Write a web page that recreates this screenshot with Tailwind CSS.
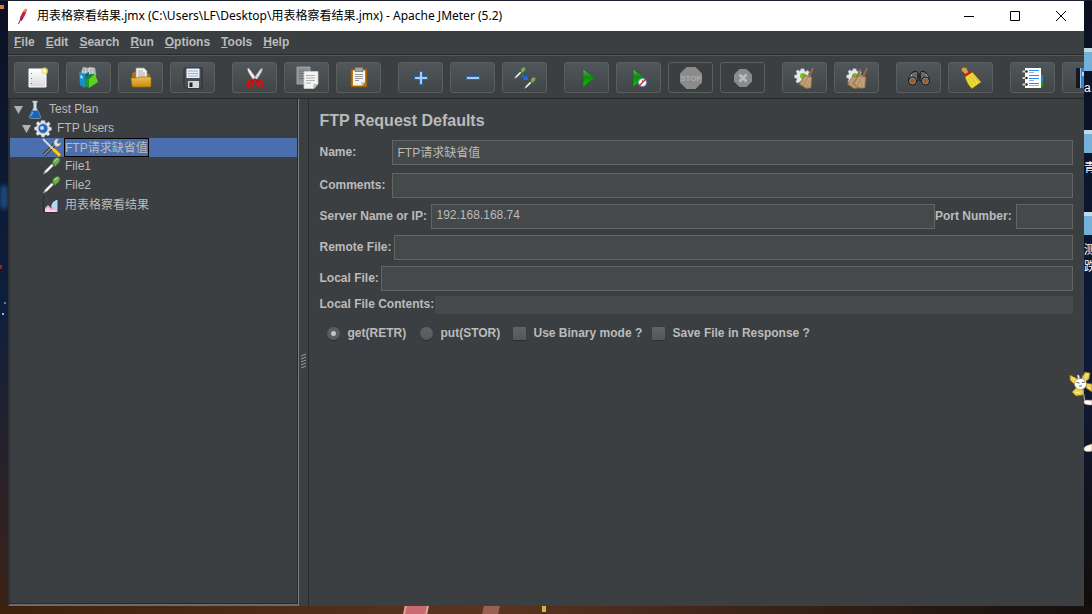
<!doctype html>
<html lang="en">
<head>
    <meta charset="UTF-8">
    <meta name="viewport" content="width=device-width, initial-scale=1.0">
    <script src="https://cdn.jsdelivr.net/npm/@tailwindcss/browser@4"></script>
    <title>用表格察看结果.jmx - Apache JMeter (5.2)</title>
</head>
<body class="h-screen overflow-hidden bg-[#0b1226] font-['Liberation_Sans','Noto_Sans_CJK_SC',sans-serif] text-xs text-[#bbbbbb]">

<!-- shared icon parts -->
<svg class="absolute size-0">
    <defs>
        <linearGradient id="play" x1="0" y1="0" x2="0" y2="1">
            <stop offset="0" stop-color="#5fb45f"/><stop offset=".45" stop-color="#118a11"/><stop offset="1" stop-color="#0cc40c"/>
        </linearGradient>
        <linearGradient id="folder" x1="0" y1="0" x2="0" y2="1">
            <stop offset="0" stop-color="#f0c04e"/><stop offset="1" stop-color="#c98711"/>
        </linearGradient>
        <linearGradient id="page" x1="0" y1="0" x2="0" y2="1">
            <stop offset="0" stop-color="#ffffff"/><stop offset="1" stop-color="#d9d9d9"/>
        </linearGradient>
        <symbol id="pipette" viewBox="0 0 20 20">
            <path d="M1 19 3 15 11 7l2 2-8 8z" fill="#dfe5df" stroke="#8f978f" stroke-width=".7"/>
            <path d="M4 16 11 9" stroke="#ffffff" stroke-width="1.6"/>
            <path d="m9.500 5.500 5 5" stroke="#35502f" stroke-width="2"/>
            <path d="M11 7c0-4 3-7 7-6.500 2.500 1 1.500 5.500-1 7l-3 3z" fill="#6da84f" stroke="#3c6b2b" stroke-width=".7"/>
            <path d="M13.500 5c1-2 2-2 3.500-3" stroke="#b5dba0" stroke-width="1.300"/>
        </symbol>
        <symbol id="gear" viewBox="0 0 20 20">
            <path d="M8 1h4l.5 2.500 1.500.600L16.200 2.600l2 2.300-1.500 2 .5 1.300L19.500 9v3l-2.500.600-.600 1.500 1.300 2.200-2.200 2-2-1.300-1.500.600L11.500 19.500h-3L7.800 17.200l-1.500-.600-2.200 1.300-2-2.200 1.300-2L2.800 12.200.5 11.500v-3l2.500-.600.600-1.500L2.300 4.200l2.200-2 2 1.300L7.500 3z" fill="#e6e8ea" stroke="#9aa0a5" stroke-width=".6"/>
        </symbol>
        <symbol id="brush" viewBox="0 0 16 22">
            <path d="m14 1-4 9" stroke="#8d6b48" stroke-width="2.200"/>
            <path d="M6 8l7 2-1 11-5 .5L0 17z" fill="#b5946d" stroke="#80603f" stroke-width=".7"/>
            <path d="M7 10 3 17M10 11l-4 9M11 12l-1 8" stroke="#d8bb92" stroke-width=".6"/>
        </symbol>
    </defs>
</svg>

<div class="grid h-screen grid-cols-[8px_minmax(0,1fr)_8px] grid-rows-[1px_minmax(0,1fr)_8px]">
    <div class="col-span-3 bg-[#1b2030]"></div>

    <!-- desktop, left of the window -->
    <div class="relative overflow-hidden bg-linear-to-b from-[#0b1123] via-[#0d1f3d] to-[#3a2014]">
        <i class="absolute left-0 top-1 h-1 w-1 bg-[#d87a3a]"></i>
        <i class="absolute left-0 top-[184px] h-6 w-2 rounded-full bg-[#1d4a80] blur-[2px]"></i>
        <i class="absolute left-0 top-[264px] h-1 w-0.5 bg-[#b01818]"></i>
        <i class="absolute left-1 top-[301px] size-0.5 bg-[#3a8f7a]"></i>
        <i class="absolute left-0.5 top-[312px] size-0.5 bg-[#9fb8e0]"></i>
    </div>

    <div class="flex min-w-0 flex-col overflow-hidden bg-[#3c3f41]">
        <header class="flex h-[30px] shrink-0 items-center bg-white text-black">
            <svg class="ml-1.5 size-5" viewBox="0 0 20 20">
                <path d="M4.500 18 7 12" stroke="#6b2a6b" stroke-width="1"/>
                <path d="M6 14c0-4 3-9 5.500-11 1-.500 1.500.500 1 2-1 4-3 7-5.500 10z" fill="#cc2037"/>
                <path d="M9 6c1-2 2-3 2.800-3.200.800.200.700 1.500.200 3.200z" fill="#f08a24"/>
                <path d="M6 14c0-1.500.500-3 1-4l2.500 2-2 3z" fill="#8a2a72"/>
            </svg>
            <h1 class="ml-[3px] flex-1 truncate font-['Noto_Sans','Noto_Sans_CJK_SC',sans-serif] text-xs">用表格察看结果.jmx (C:\Users\LF\Desktop\用表格察看结果.jmx) - Apache JMeter (5.2)</h1>
            <button class="grid h-full w-[46px] place-items-center" aria-label="Minimize"><svg class="size-3" viewBox="0 0 12 12"><path d="M1 6.500h10" stroke="#000"/></svg></button>
            <button class="grid h-full w-[46px] place-items-center" aria-label="Maximize"><svg class="size-3" viewBox="0 0 12 12"><path d="M1.500 1.500h9v9h-9z" fill="none" stroke="#000"/></svg></button>
            <button class="grid h-full w-[46px] place-items-center" aria-label="Close"><svg class="size-3" viewBox="0 0 12 12"><path d="m1 1 10 10M11 1 1 11" stroke="#000"/></svg></button>
        </header>

        <nav class="flex h-[23px] shrink-0 items-center gap-[11px] pb-0.5 pl-1.5 font-bold">
            <button><u>F</u>ile</button>
            <button><u>E</u>dit</button>
            <button><u>S</u>earch</button>
            <button><u>R</u>un</button>
            <button><u>O</u>ptions</button>
            <button><u>T</u>ools</button>
            <button><u>H</u>elp</button>
        </nav>

        <!-- toolbar -->
        <div class="flex h-11 shrink-0 items-center gap-[17px] overflow-hidden border-t border-[#282828] pl-1.5 pt-0.5 shadow-[inset_0_1px_#555758] [&_button]:grid [&_button]:h-[31px] [&_button]:w-[45px] [&_button]:shrink-0 [&_button]:place-items-center [&_button]:rounded-[3px] [&_button]:border [&_button]:border-[#5b5e5f] [&_button:enabled]:bg-linear-to-b [&_button:enabled]:from-[#50565a] [&_button:enabled]:to-[#414648] [&_svg]:size-6">
            <div class="flex gap-[7px]">
                <button aria-label="New">
                    <svg viewBox="0 0 24 24">
                        <path d="M4 3h17v18H4z" fill="url(#page)" stroke="#fff"/>
                        <path d="M6.500 7v1M6.500 12v1M6.500 17v1" stroke="#777"/>
                        <circle cx="19.500" cy="5" r="3.500" fill="#f3e35c" opacity=".75"/><circle cx="19.500" cy="5" r="1.500" fill="#fffbd0"/>
                    </svg>
                </button>
                <button aria-label="Templates">
                    <svg viewBox="0 0 24 24">
                        <path d="M4 7 6 1l5 1 2-1 5 1 1 7-8 4z" fill="#c9ced0" stroke="#84898b" stroke-width=".6"/>
                        <path d="M7 2v6M10 2v6M14 3v5M17 3v5" stroke="#8f9698" stroke-width=".8"/>
                        <path d="m2 6 6 2v14l-5-3z" fill="#168ec7"/><path d="m8 8 4-2v12l-4 4z" fill="#0b6796"/>
                        <path d="M3.500 9v3l2 1v-3z" fill="#bfe7fa"/>
                        <path d="m8 12 4 1v9l-4-2z" fill="#249a1d"/><path d="m12 13 6-5 3 8-9 6z" fill="#55d522"/>
                        <path d="m8 12 5-4h5l-6 5z" fill="#2f7c28"/>
                    </svg>
                </button>
                <button aria-label="Open">
                    <svg viewBox="0 0 24 24">
                        <path d="M3 21V7l2-1h4l2 2h10v13z" fill="#a96f10"/>
                        <path d="M7 14V2h8l3 3v9z" fill="#f2f2f2" stroke="#999" stroke-width=".7"/>
                        <path d="M9 5h5M9 7h7M9 9h7M9 11h7" stroke="#999" stroke-width=".8"/>
                        <path d="M2 12h6l2-1h12v9l-1 1H4l-1-1z" fill="url(#folder)" stroke="#9e6a0b" stroke-width=".7"/>
                    </svg>
                </button>
                <button aria-label="Save">
                    <svg viewBox="0 0 24 24">
                        <path d="M3 2h18v20H5l-2-2z" fill="#4b4e51" stroke="#2c2e30"/>
                        <path d="M5.500 2.500h13V12h-13z" fill="#e9f1fa"/>
                        <path d="M7 5h10M7 7.500h10M7 10h10" stroke="#8fb0da"/>
                        <path d="M7 15h11v7H7z" fill="#d4d6d8"/><path d="M8.500 16.500h3V21h-3z" fill="#222"/>
                    </svg>
                </button>
            </div>
            <div class="flex gap-[7px]">
                <button aria-label="Cut">
                    <svg viewBox="0 0 24 24">
                        <path d="M5 2c-1.500 2 2 7 6.500 13l2-2C10 8 7 3 5 2z" fill="#f4f4f4" stroke="#9b9b9b" stroke-width=".6"/>
                        <path d="M19 2c1.500 2-2 7-6.500 13l-2-2C14 8 17 3 19 2z" fill="#dcdcdc" stroke="#8b8b8b" stroke-width=".6"/>
                        <ellipse cx="7" cy="18" rx="2.400" ry="2.600" fill="none" stroke="#d60f0f" stroke-width="2.400"/>
                        <ellipse cx="17" cy="18" rx="2.400" ry="2.600" fill="none" stroke="#d60f0f" stroke-width="2.400"/>
                        <path d="m8.500 15.500 3.500-2 3.500 2" fill="none" stroke="#c80c0c" stroke-width="2"/>
                    </svg>
                </button>
                <button aria-label="Copy">
                    <svg viewBox="0 0 24 24">
                        <path d="M2 1h13v17H2z" fill="#8f9191" stroke="#b1b3b3" stroke-width=".8"/>
                        <path d="M4 5h9M4 7.500h9M4 10h5M4 12.500h5" stroke="#6e7070"/>
                        <path d="M9 5.500h14V18l-4 4.500H9z" fill="#f4f4f4" stroke="#ccc" stroke-width=".8"/>
                        <path d="M11 9.500h9M11 12h9M11 14.500h9M11 17h5" stroke="#b0b0b0"/>
                        <path d="M18.500 22.500V18H23z" fill="#bcbcbc"/>
                    </svg>
                </button>
                <button aria-label="Paste">
                    <svg viewBox="0 0 24 24">
                        <path d="M4 3h16v18H4z" fill="#b87813" stroke="#80510a"/>
                        <path d="M6 4.500h12V16l-3 3.500H6z" fill="#f5f5f5"/>
                        <path d="M8 1.500h8v4H8z" fill="#a3a59f" stroke="#6d6f69" stroke-width=".7"/>
                        <path d="M8 8.500h8M8 10.500h8M8 12.500h8M8 14.500h4" stroke="#999"/>
                        <path d="M14 20v-4h4z" fill="#c8c8c8"/>
                    </svg>
                </button>
            </div>
            <div class="flex gap-[7px]">
                <button aria-label="Expand All"><svg viewBox="0 0 24 24"><path d="M10.500 5.500h3v5h5v3h-5v5h-3v-5h-5v-3h5z" fill="#a9cbee" stroke="#2a66b0"/></svg></button>
                <button aria-label="Collapse All"><svg viewBox="0 0 24 24"><path d="M5.500 10.500h13v3h-13z" fill="#a9cbee" stroke="#2a66b0"/></svg></button>
                <button aria-label="Toggle">
                    <svg viewBox="0 0 24 24">
                        <use href="#pipette" x="1" y="1" width="12" height="12"/>
                        <use href="#pipette" x="11" y="11" width="12" height="12"/>
                        <path d="m9 9 4 4" stroke="#1f6fe0" stroke-width="1.800"/><path d="M15 14h-5l4-5z" fill="#1f6fe0"/>
                    </svg>
                </button>
            </div>
            <div class="flex gap-[7px]">
                <button aria-label="Start"><svg viewBox="0 0 24 24"><path d="m8 3 12 9-12 9z" fill="url(#play)" stroke="#0b6b0b" stroke-width=".6"/></svg></button>
                <button aria-label="Start no pauses">
                    <svg viewBox="0 0 24 24">
                        <path d="m6 3 12 9-12 9z" fill="url(#play)" stroke="#0b6b0b" stroke-width=".6"/>
                        <circle cx="15.500" cy="16.500" r="4" fill="#fff" stroke="#5a93d6"/>
                        <path d="M15.500 14v3" stroke="#888"/><path d="m11.500 20.500 8-8" stroke="#e02020" stroke-width="1.300"/>
                    </svg>
                </button>
                <button disabled aria-label="Stop">
                    <svg viewBox="0 0 24 24">
                        <path d="M7.500 1h9L23 7.500v9L16.500 23h-9L1 16.500v-9z" fill="#8b8b8b"/>
                        <text x="12" y="15" text-anchor="middle" font-size="8" font-weight="700" fill="#adadad">STOP</text>
                    </svg>
                </button>
                <button disabled aria-label="Shutdown">
                    <svg viewBox="0 0 24 24">
                        <path d="M8.500 3h7L21 8.500v7L15.500 21h-7L3 15.500v-7z" fill="#8b8b8b"/>
                        <path d="m8.500 8.500 7 7M15.500 8.500l-7 7" stroke="#bababa" stroke-width="2.800"/>
                    </svg>
                </button>
            </div>
            <div class="flex gap-[7px]">
                <button aria-label="Clear">
                    <svg viewBox="0 0 24 24">
                        <use href="#gear" x="1" y="2" width="17" height="17"/><circle cx="10" cy="10" r="3" fill="#7cbf1c"/>
                        <use href="#brush" x="6" y="1" width="16" height="22"/>
                    </svg>
                </button>
                <button aria-label="Clear All">
                    <svg viewBox="0 0 24 24">
                        <use href="#gear" x="1" y="2" width="17" height="17"/><circle cx="10" cy="10" r="3" fill="#7cbf1c"/>
                        <use href="#brush" x="2" y="2" width="16" height="21"/><use href="#brush" x="8" y="1" width="16" height="22"/>
                    </svg>
                </button>
            </div>
            <div class="flex gap-[7px]">
                <button aria-label="Search">
                    <svg viewBox="0 0 24 24">
                        <path d="M5 6.500 9 5l2 2v8H1.500v-2zM19 6.500 15 5l-2 2v8h9.500v-2z" fill="#686868" stroke="#171717"/>
                        <path d="M10 8h4v5h-4z" fill="#2b2b2b"/><path d="m5 8-2 4M19 8l2 4" stroke="#b5b5b5"/>
                        <circle cx="5.500" cy="15" r="4" fill="#878787" stroke="#171717"/><circle cx="5.500" cy="15" r="2.400" fill="#9b5a2a"/>
                        <circle cx="18.500" cy="15" r="4" fill="#878787" stroke="#171717"/><circle cx="18.500" cy="15" r="2.400" fill="#9b5a2a"/>
                    </svg>
                </button>
                <button aria-label="Reset Search">
                    <svg viewBox="0 0 24 24">
                        <path d="M3 2c2-1.500 5-.500 5 1l2 4-3 2-3-3C2.500 5.500 2 3.500 3 2z" fill="#d9a04a" stroke="#865311" stroke-width=".6"/>
                        <path d="m6 10 7-4 9 10-9 6.500C10 20 7 15 6 10z" fill="#f0dc3c" stroke="#a98a12" stroke-width=".7"/>
                        <path d="m9 12 5 8M11 10l6 8M13 9l7 7" stroke="#c9ab1c" stroke-width=".7"/>
                        <path d="m5.500 10 7-4.500" stroke="#cf1d1d" stroke-width="2.500"/>
                    </svg>
                </button>
            </div>
            <div class="flex gap-[7px]">
                <button aria-label="Function Helper">
                    <svg viewBox="0 0 24 24">
                        <path d="M18 9h4v6h-4z" fill="#1784e6"/><path d="M18 15h4v6h-4z" fill="#18a018"/>
                        <path d="M4 2h16v20H4z" fill="#fff"/>
                        <path d="M8 4.500h10M8 9.500h10M8 12.500h10M8 17.500h10" stroke="#2f8bec"/><path d="M8 6.500h5M8 14.500h5M8 19.500h10" stroke="#7cb5f0"/>
                        <path d="M1.500 5.500h4M1.500 12h4M1.500 18.500h4" stroke="#d5d5d5" stroke-width="2"/>
                        <circle cx="5.500" cy="5.500" r="1.200" fill="#222"/><circle cx="5.500" cy="12" r="1.200" fill="#222"/><circle cx="5.500" cy="18.500" r="1.200" fill="#222"/>
                    </svg>
                </button>
                <button aria-label="Help">
                    <svg viewBox="0 0 24 24">
                        <path d="M3 2h18v20H3z" fill="#3e7fd4"/><path d="M3 2h4v20H3z" fill="#15181c"/><path d="M7.500 2v20" stroke="#9ec2ee"/><path d="M9 6h3v4H9z" fill="#b5d5f7"/>
                    </svg>
                </button>
            </div>
        </div>

        <main class="flex min-h-0 flex-1 border-t border-[#27292a]">
            <!-- test plan tree -->
            <ul class="w-[27%] shrink-0 border-b-2 border-l-2 border-r border-b-[#696c6e] border-l-[#2d3032] border-r-[#7b7e80] pt-px shadow-[inset_-1px_-1px_#27292a] [&>li]:flex [&>li]:h-[19px] [&>li]:items-center [&_svg]:shrink-0">
                <li class="pl-1">
                    <svg class="size-2.5" viewBox="0 0 10 10"><path d="M0 1h9L4.500 9z" fill="#b0b0b0"/></svg>
                    <svg class="mx-px h-[19px] w-5" viewBox="0 0 20 19">
                        <path d="M7.500 1h5v1l-1 1v5l4.500 9-1 1.500H5L4 17l4.500-9V3l-1-1z" fill="#cfdbe4" stroke="#8a98a3" stroke-width=".5"/>
                        <path d="m7.500 10.500h5l3.300 6.500-1 1.200H5.200L4.200 17z" fill="#1a65b8"/><path d="m8 12-2 4" stroke="#79b6ee"/>
                    </svg>
                    <span class="ml-[3px] pb-0.5">Test Plan</span>
                </li>
                <li class="pl-3">
                    <svg class="size-2.5" viewBox="0 0 10 10"><path d="M0 1h9L4.500 9z" fill="#b0b0b0"/></svg>
                    <svg class="mx-px h-[19px] w-5" viewBox="0 0 20 19">
                        <use href="#gear" x="1" y="0" width="18" height="19"/>
                        <circle cx="10" cy="9.500" r="4.800" fill="#2c66b4" stroke="#9eb4cc" stroke-width=".8"/><circle cx="9" cy="9" r="2" fill="#c2dcf5"/>
                    </svg>
                    <span class="ml-[3px] pb-0.5">FTP Users</span>
                </li>
                <li class="mr-px bg-[#4b6eaf] pl-8">
                    <svg class="h-[19px] w-5" viewBox="0 0 20 19">
                        <path d="M2 17 13 6" stroke="#343838" stroke-width="3.500"/><path d="M2 17 13 6" stroke="#8d9393" stroke-width="1.500"/>
                        <path d="M12 6c-1-3 2-6 5-5l-2 3 1 1.500 3-1c0 3-3 5-5.500 4z" fill="#dde2e2" stroke="#6b7373" stroke-width=".6"/>
                        <path d="m1 1 11 11" stroke="#d6dadb" stroke-width="1.800"/>
                        <path d="m11 11 7 6.500" stroke="#b47c00" stroke-width="4"/><path d="m11 11 7 6.500" stroke="#ffcf24" stroke-width="2.400"/>
                    </svg>
                    <span class="ml-0.5 h-[19px] border border-black leading-[19px]">FTP请求缺省值</span>
                </li>
                <li class="pl-8">
                    <svg class="h-[19px] w-5"><use href="#pipette" width="19" height="18"/></svg>
                    <span class="ml-[3px] pb-0.5">File1</span>
                </li>
                <li class="pl-8">
                    <svg class="h-[19px] w-5"><use href="#pipette" width="19" height="18"/></svg>
                    <span class="ml-[3px] pb-0.5">File2</span>
                </li>
                <li class="pl-8">
                    <svg class="h-[19px] w-5" viewBox="0 0 20 19">
                        <path d="M1.500 1v16.500H17" fill="none" stroke="#2b2d2e"/>
                        <path d="M9 12c1-5 4-7 6.500-7v12c-3 0-3-3-6.500-5z" fill="#b4d8f2"/>
                        <path d="M3 17v-4l3-3 3 3 2-1 4 4v1z" fill="#f3a6d6"/>
                        <path d="M3 17v-2.500l3-2 3 3 3-1 3 2.500z" fill="#fbd3ee"/>
                    </svg>
                    <span class="ml-[3px]">用表格察看结果</span>
                </li>
            </ul>

            <!-- split pane grip -->
            <div class="grid w-[9px] shrink-0 place-items-center pt-4">
                <svg class="h-4 w-[5px] text-[#a5a7a8]" viewBox="0 0 5 16"><path d="m0 3 5-2M0 6l5-2M0 9l5-2M0 12l5-2M0 15l5-2" stroke="currentColor" stroke-width=".9"/></svg>
            </div>

            <form class="min-w-0 flex-1 border-l border-[#27292a] px-[11px] pt-[11px] [&_label]:whitespace-nowrap [&_label]:pb-0.5 [&_label]:font-bold [&_input:is([type=text])]:h-[25px] [&_input:is([type=text])]:min-w-0 [&_input:is([type=text])]:border [&_input:is([type=text])]:border-[#646464] [&_input:is([type=text])]:bg-[#45494a] [&_input:is([type=text])]:px-[5px] [&_input:is([type=text])]:pb-[3px]">
                <h2 class="mb-2 text-base leading-[22px] font-bold">FTP Request Defaults</h2>
                <div class="mb-2 flex items-center">
                    <label for="name" class="w-[72px] shrink-0">Name:</label>
                    <input id="name" type="text" class="flex-1" value="FTP请求缺省值">
                </div>
                <div class="mb-1.5 flex items-center">
                    <label for="comments" class="w-[72px] shrink-0">Comments:</label>
                    <input id="comments" type="text" class="flex-1">
                </div>
                <div class="mb-1.5 flex items-center">
                    <label for="server" class="w-[111px] shrink-0">Server Name or IP:</label>
                    <input id="server" type="text" class="flex-1" value="192.168.168.74">
                    <label for="port" class="w-[81px] shrink-0">Port Number:</label>
                    <input id="port" type="text" class="w-[57px]">
                </div>
                <div class="mb-1.5 flex items-center">
                    <label for="remote" class="w-[74px] shrink-0">Remote File:</label>
                    <input id="remote" type="text" class="flex-1">
                </div>
                <div class="mb-[5px] flex items-center">
                    <label for="local" class="w-[61px] shrink-0">Local File:</label>
                    <input id="local" type="text" class="flex-1">
                </div>
                <div class="mb-2.5 flex items-center">
                    <label for="contents" class="w-[115px] shrink-0">Local File Contents:</label>
                    <textarea id="contents" class="h-[18px] min-w-0 flex-1 resize-none bg-[#45494a]"></textarea>
                </div>
                <div class="flex items-center pl-[7px] pt-px [&_input]:mr-2 [&_input]:size-[13px] [&_input]:appearance-none [&_input]:bg-linear-to-b [&_input]:from-[#616466] [&_input]:to-[#54585a] [&_input]:shadow-[0_1px_1px_#2c2e2f]">
                    <label class="flex w-[93px] items-center"><input type="radio" name="mode" checked class="rounded-full checked:border-4 checked:border-[#5b5e60] checked:bg-[#c4c4c4] checked:bg-none">get(RETR)</label>
                    <label class="flex w-[93px] items-center"><input type="radio" name="mode" class="rounded-full">put(STOR)</label>
                    <label class="flex w-[139px] items-center"><input type="checkbox" class="rounded-[1px]">Use Binary mode ?</label>
                    <label class="flex items-center"><input type="checkbox" class="rounded-[1px]">Save File in Response ?</label>
                </div>
            </form>
        </main>
    </div>

    <!-- desktop icons that stick out on the right -->
    <div class="relative bg-linear-to-b from-[#0a1020] via-[#0d1a38] via-60% to-[#120d0a] text-white">
        <i class="absolute left-0 top-[47px] h-[23px] w-2 border-t-4 border-[#c0dbe4] bg-[#74b0d8]"></i>
        <span class="absolute left-0 top-[79px] w-2 overflow-hidden">a</span>
        <i class="absolute left-0 top-[129px] h-[23px] w-2 border-t-4 border-[#c0dbe4] bg-[#74b0d8]"></i>
        <span class="absolute left-0 top-[159px] w-2 overflow-hidden whitespace-nowrap">青</span>
        <i class="absolute left-0 top-[211px] h-[23px] w-2 border-t-4 border-[#c0dbe4] bg-[#74b0d8]"></i>
        <span class="absolute left-0 top-[241px] w-2 overflow-hidden whitespace-nowrap">测</span>
        <span class="absolute left-0 top-[258px] w-2 overflow-hidden whitespace-nowrap">跌</span>
        <svg class="absolute right-0 top-[369px] h-[86px] w-6" viewBox="0 0 24 86">
            <path d="M10 9 2 5 2 10 7 15zM14 8l3-6 5 1-1 6-4 3zM18 13l6 1v8l-6-4zM9 17l-5 5 4 4 7-1 1-5z" fill="#f0d14a" stroke="#8a6b1a" stroke-width=".7"/>
            <path d="m4 7 4 4M7 22l5 1M17 8l3-4M20 17l3 2" stroke="#fff3a0"/>
            <path d="m10 9-1-4 2 0 1 4M14 9l1-4 1 1-1 4" fill="#fff" stroke="#777" stroke-width=".5"/>
            <ellipse cx="12.500" cy="14" rx="6" ry="5.500" fill="#fff" stroke="#8b8672" stroke-width=".6"/>
            <path d="m8.500 12.500 3 .5M14 12.500l3-.500M11 16h3" stroke="#333" stroke-width=".8"/>
            <path d="m15 20 2 12" stroke="#b49b8b" stroke-width="1.200"/>
            <path d="M16 31c2-2 5 0 8-1v5c-3 0-7 0-8-2z" fill="#fff" stroke="#a0796a" stroke-width=".6"/>
            <path d="M16 79c0-3 5-4 8-5v7c-4 1-8 1-8-2z" fill="#fff7ea" stroke="#b6a48a" stroke-width=".6"/>
        </svg>
    </div>

    <div class="col-span-3 flex bg-linear-to-r from-[#3e220c] via-[#5b3420] via-45% to-[#15100d]">
        <i class="ml-[37%] h-2 w-6 -skew-x-12 border-x-2 border-[#d7a696] bg-[#c86a70]"></i>
        <i class="ml-[5%] h-2 w-4 -skew-x-12 bg-[#9a6152]"></i>
        <i class="ml-[4%] h-1.5 w-1 bg-[#d9b343]"></i>
    </div>
</div>
</body>
</html>
